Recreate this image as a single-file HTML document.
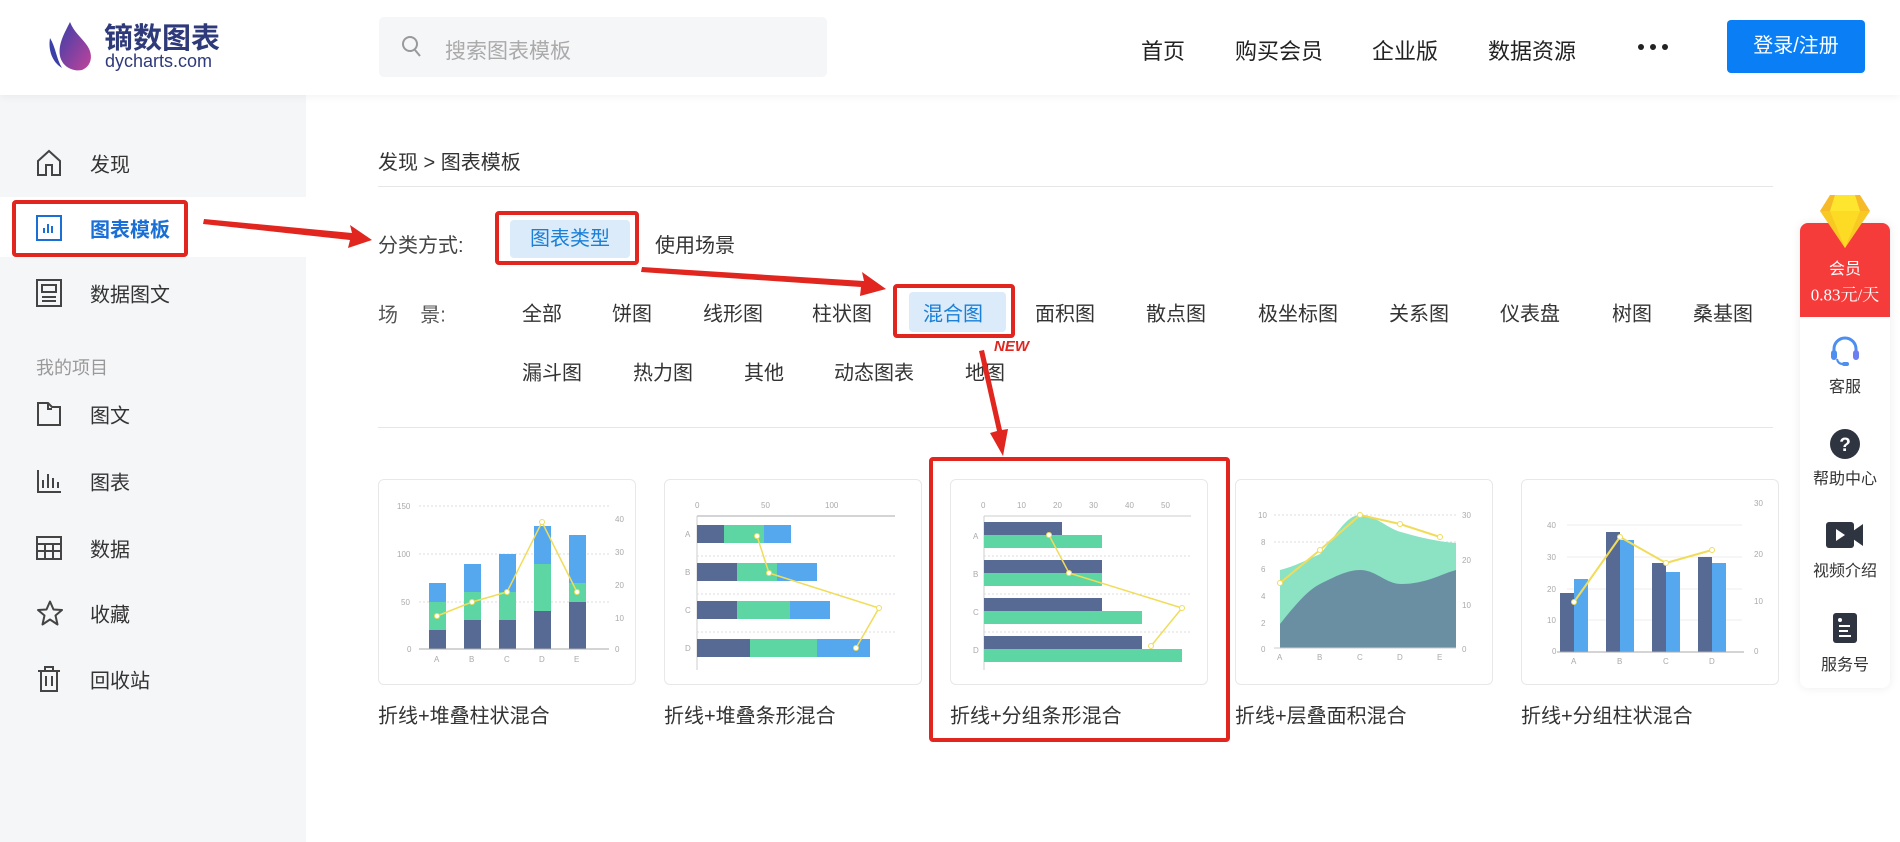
<!DOCTYPE html>
<html><head><meta charset="utf-8">
<style>
*{margin:0;padding:0;box-sizing:border-box}
body{width:1900px;height:842px;overflow:hidden;background:#fff;font-family:"Liberation Sans","Noto Sans CJK SC",sans-serif;color:#333;position:relative}
.a{position:absolute;white-space:nowrap}
.hdr{position:absolute;left:0;top:0;width:1900px;height:95px;background:#fff;box-shadow:0 2px 8px rgba(0,0,0,.05);z-index:2}
.side{position:absolute;left:0;top:95px;width:306px;height:747px;background:#f5f6f8}
.si{position:absolute;left:90px;font-size:20px;color:#333;transform:translateY(-50%)}
.ic{position:absolute;left:36px;transform:translateY(-50%)}
.cat{position:absolute;font-size:20px;color:#333;transform:translateY(-50%)}
.card{position:absolute;top:479px;width:258px;height:206px;border:1px solid #e8e8e8;border-radius:6px;background:#fff}
.ct{position:absolute;top:714px;font-size:20px;color:#333;transform:translateY(-50%)}
.rb{position:absolute;border:4px solid #e0261f;border-radius:4px}
.rp{position:absolute;left:1800px;width:90px;text-align:center;font-size:16px;color:#333;transform:translateY(-50%)}
</style></head><body>
<div class="hdr">
 <svg class="a" style="left:46px;top:20px" width="50" height="52" viewBox="0 0 50 52">
  <defs><linearGradient id="lg" x1="0" y1="0" x2="1" y2="1"><stop offset="0" stop-color="#3b3fa8"/><stop offset="1" stop-color="#c2439b"/></linearGradient></defs>
  <path d="M24 2 C18 14 12 24 14 36 C16 46 26 52 36 50 C46 46 48 34 40 24 C34 16 28 12 24 2Z" fill="url(#lg)"/>
  <path d="M4 18 C2 30 6 42 16 48 C10 38 10 28 4 18Z" fill="#3b3fa8"/>
 </svg>
 <div class="a" style="left:104px;top:21px;font-size:29px;line-height:30px;font-weight:bold;color:#2e3a7a;font-family:'Noto Sans CJK SC',sans-serif">镝数图表</div>
 <div class="a" style="left:105px;top:52px;font-size:18px;line-height:19px;color:#2e3a7a">dycharts.com</div>
 <div class="a" style="left:379px;top:17px;width:448px;height:60px;background:#f5f6f8;border-radius:5px"></div>
 <svg class="a" style="left:401px;top:35px" width="22" height="24" viewBox="0 0 22 24"><circle cx="9" cy="9" r="7" fill="none" stroke="#999" stroke-width="2"/><path d="M14 15 L19 21" stroke="#999" stroke-width="2"/></svg>
 <div class="a" style="left:445px;top:35px;font-size:21px;color:#aaa">搜索图表模板</div>
 <div class="a" style="left:1141px;top:34px;font-size:22px;color:#222">首页</div>
 <div class="a" style="left:1235px;top:34px;font-size:22px;color:#222">购买会员</div>
 <div class="a" style="left:1372px;top:34px;font-size:22px;color:#222">企业版</div>
 <div class="a" style="left:1488px;top:34px;font-size:22px;color:#222">数据资源</div>
 <div class="a" style="left:1638px;top:44px;width:6px;height:6px;border-radius:3px;background:#222;box-shadow:12px 0 #222,24px 0 #222"></div>
 <div class="a" style="left:1727px;top:20px;width:138px;height:53px;background:#0a7ff5;border-radius:4px;color:#fff;font-size:20px;text-align:center;line-height:53px">登录/注册</div>
</div>

<div class="side">
 <div class="a" style="left:0;top:102px;width:306px;height:60px;background:#fff"></div>
</div>
<svg class="ic" style="top:163px" width="26" height="28" viewBox="0 0 26 28"><path d="M2 12 L13 2 L24 12 V26 H16 V16 H10 V26 H2Z" fill="none" stroke="#444" stroke-width="2"/></svg>
<div class="si" style="top:163px">发现</div>
<svg class="ic" style="top:228px" width="26" height="26" viewBox="0 0 26 26"><rect x="1" y="1" width="24" height="24" fill="none" stroke="#1a6fd6" stroke-width="2"/><path d="M8 18V13M12 18V9M16 18V11" stroke="#1a6fd6" stroke-width="2"/></svg>
<div class="si" style="top:228px;color:#1a6fd6;font-weight:bold">图表模板</div>
<svg class="ic" style="top:293px" width="26" height="28" viewBox="0 0 26 28"><rect x="1" y="1" width="24" height="26" fill="none" stroke="#444" stroke-width="2"/><rect x="6" y="6" width="14" height="7" fill="none" stroke="#444" stroke-width="2"/><path d="M6 18H20M6 22H20" stroke="#444" stroke-width="2"/></svg>
<div class="si" style="top:293px">数据图文</div>
<div class="si" style="top:367px;left:36px;font-size:18px;color:#999">我的项目</div>
<svg class="ic" style="top:414px" width="26" height="26" viewBox="0 0 26 26"><path d="M2 2H12L16 6H24V24H2Z M12 2V8H16" fill="none" stroke="#444" stroke-width="2"/></svg>
<div class="si" style="top:414px">图文</div>
<svg class="ic" style="top:481px" width="26" height="26" viewBox="0 0 26 26"><path d="M2 2V24H25M7 20V12M12 20V6M17 20V10M22 20V14" fill="none" stroke="#444" stroke-width="2"/></svg>
<div class="si" style="top:481px">图表</div>
<svg class="ic" style="top:548px" width="26" height="24" viewBox="0 0 26 24"><rect x="1" y="1" width="24" height="22" fill="none" stroke="#444" stroke-width="2"/><path d="M1 8H25M1 15H25M9 8V23M17 8V23" stroke="#444" stroke-width="2"/></svg>
<div class="si" style="top:548px">数据</div>
<svg class="ic" style="top:613px" width="28" height="27" viewBox="0 0 28 27"><path d="M14 2L17.5 10L26 10.5L19.5 16L21.5 25L14 20L6.5 25L8.5 16L2 10.5L10.5 10Z" fill="none" stroke="#444" stroke-width="2" stroke-linejoin="round"/></svg>
<div class="si" style="top:613px">收藏</div>
<svg class="ic" style="top:679px" width="26" height="28" viewBox="0 0 26 28"><path d="M2 6H24M9 6V2H17V6M5 6V26H21V6M10 11V21M16 11V21" fill="none" stroke="#444" stroke-width="2"/></svg>
<div class="si" style="top:679px">回收站</div>

<div class="a" style="left:378px;top:146px;font-size:20px;color:#333">发现 &gt; 图表模板</div>
<div class="a" style="left:378px;top:186px;width:1395px;height:1px;background:#e6e6e6"></div>
<div class="a" style="left:378px;top:229px;font-size:20px;color:#444">分类方式:</div>
<div class="a" style="left:510px;top:220px;width:120px;height:38px;background:#dcebfa;border-radius:4px;color:#1a7fd6;font-size:20px;text-align:center;line-height:38px">图表类型</div>
<div class="a" style="left:655px;top:229px;font-size:20px;color:#333">使用场景</div>
<div class="cat" style="left:378px;top:313px;color:#555">场&nbsp;&nbsp;&nbsp;&nbsp;景:</div>
<div class="a" style="left:909px;top:292px;width:97px;height:40px;background:#dcebfa;border-radius:4px"></div>
<div class="cat" style="left:522px;top:312px">全部</div>
<div class="cat" style="left:612px;top:312px">饼图</div>
<div class="cat" style="left:703px;top:312px">线形图</div>
<div class="cat" style="left:812px;top:312px">柱状图</div>
<div class="cat" style="left:923px;top:312px;color:#1a7fd6">混合图</div>
<div class="cat" style="left:1035px;top:312px">面积图</div>
<div class="cat" style="left:1146px;top:312px">散点图</div>
<div class="cat" style="left:1258px;top:312px">极坐标图</div>
<div class="cat" style="left:1389px;top:312px">关系图</div>
<div class="cat" style="left:1500px;top:312px">仪表盘</div>
<div class="cat" style="left:1612px;top:312px">树图</div>
<div class="cat" style="left:1693px;top:312px">桑基图</div>
<div class="cat" style="left:522px;top:371px">漏斗图</div>
<div class="cat" style="left:633px;top:371px">热力图</div>
<div class="cat" style="left:744px;top:371px">其他</div>
<div class="cat" style="left:834px;top:371px">动态图表</div>
<div class="cat" style="left:965px;top:371px">地图</div>
<div class="a" style="left:994px;top:338px;font-size:15px;font-weight:bold;font-style:italic;color:#e0261f">NEW</div>
<div class="a" style="left:378px;top:427px;width:1395px;height:1px;background:#e6e6e6"></div>

<div class="card" style="left:378px"><svg width="258" height="206" viewBox="0 0 258 206" font-size="8" fill="#aaa">
<g stroke="#ddd" stroke-dasharray="2 2"><line x1="40" y1="26" x2="230" y2="26"/><line x1="40" y1="74" x2="230" y2="74"/><line x1="40" y1="122" x2="230" y2="122"/></g>
<text x="18" y="29">150</text><text x="18" y="77">100</text><text x="22" y="125">50</text><text x="28" y="172">0</text>
<text x="236" y="42">40</text><text x="236" y="75">30</text><text x="236" y="108">20</text><text x="236" y="141">10</text><text x="236" y="172">0</text>
<rect x="50" y="150" width="17" height="19" fill="#566a94"/><rect x="50" y="122" width="17" height="28" fill="#5dd6a3"/><rect x="50" y="103" width="17" height="19" fill="#55a8ee"/>
<rect x="85" y="140" width="17" height="29" fill="#566a94"/><rect x="85" y="112" width="17" height="28" fill="#5dd6a3"/><rect x="85" y="84" width="17" height="28" fill="#55a8ee"/>
<rect x="120" y="140" width="17" height="29" fill="#566a94"/><rect x="120" y="112" width="17" height="28" fill="#5dd6a3"/><rect x="120" y="74" width="17" height="38" fill="#55a8ee"/>
<rect x="155" y="131" width="17" height="38" fill="#566a94"/><rect x="155" y="84" width="17" height="47" fill="#5dd6a3"/><rect x="155" y="46" width="17" height="38" fill="#55a8ee"/>
<rect x="190" y="122" width="17" height="47" fill="#566a94"/><rect x="190" y="103" width="17" height="19" fill="#5dd6a3"/><rect x="190" y="55" width="17" height="48" fill="#55a8ee"/>
<line x1="40" y1="169" x2="230" y2="169" stroke="#aaa"/>
<polyline points="58,136 93,122 128,112 163,42 198,112" fill="none" stroke="#f1dc5a" stroke-width="1.5"/>
<g fill="#fff" stroke="#f1dc5a"><circle cx="58" cy="136" r="2.5"/><circle cx="93" cy="122" r="2.5"/><circle cx="128" cy="112" r="2.5"/><circle cx="163" cy="42" r="2.5"/><circle cx="198" cy="112" r="2.5"/></g>
<text x="55" y="182">A</text><text x="90" y="182">B</text><text x="125" y="182">C</text><text x="160" y="182">D</text><text x="195" y="182">E</text></svg></div>

<div class="card" style="left:664px"><svg width="258" height="206" viewBox="0 0 258 206" font-size="8" fill="#aaa">
<text x="30" y="28">0</text><text x="96" y="28">50</text><text x="160" y="28">100</text>
<line x1="32" y1="36" x2="230" y2="36" stroke="#aaa"/><line x1="32" y1="36" x2="32" y2="190" stroke="#ccc"/>
<g stroke="#ddd" stroke-dasharray="2 2"><line x1="32" y1="76" x2="230" y2="76"/><line x1="32" y1="114" x2="230" y2="114"/><line x1="32" y1="152" x2="230" y2="152"/></g>
<text x="20" y="57">A</text><text x="20" y="95">B</text><text x="20" y="133">C</text><text x="20" y="171">D</text>
<rect x="32" y="45" width="27" height="18" fill="#566a94"/><rect x="59" y="45" width="40" height="18" fill="#5dd6a3"/><rect x="99" y="45" width="27" height="18" fill="#55a8ee"/>
<rect x="32" y="83" width="40" height="18" fill="#566a94"/><rect x="72" y="83" width="40" height="18" fill="#5dd6a3"/><rect x="112" y="83" width="40" height="18" fill="#55a8ee"/>
<rect x="32" y="121" width="40" height="18" fill="#566a94"/><rect x="72" y="121" width="53" height="18" fill="#5dd6a3"/><rect x="125" y="121" width="40" height="18" fill="#55a8ee"/>
<rect x="32" y="159" width="53" height="18" fill="#566a94"/><rect x="85" y="159" width="67" height="18" fill="#5dd6a3"/><rect x="152" y="159" width="53" height="18" fill="#55a8ee"/>
<polyline points="92,56 104,93 214,128 191,168" fill="none" stroke="#f1dc5a" stroke-width="1.5"/>
<g fill="#fff" stroke="#f1dc5a"><circle cx="92" cy="56" r="2.5"/><circle cx="104" cy="93" r="2.5"/><circle cx="214" cy="128" r="2.5"/><circle cx="191" cy="168" r="2.5"/></g></svg></div>

<div class="card" style="left:950px"><svg width="258" height="206" viewBox="0 0 258 206" font-size="8" fill="#aaa">
<text x="30" y="28">0</text><text x="66" y="28">10</text><text x="102" y="28">20</text><text x="138" y="28">30</text><text x="174" y="28">40</text><text x="210" y="28">50</text>
<line x1="33" y1="36" x2="240" y2="36" stroke="#ccc"/><line x1="33" y1="36" x2="33" y2="190" stroke="#ccc"/>
<g stroke="#ddd" stroke-dasharray="2 2"><line x1="33" y1="76" x2="240" y2="76"/><line x1="33" y1="114" x2="240" y2="114"/><line x1="33" y1="152" x2="240" y2="152"/></g>
<text x="22" y="59">A</text><text x="22" y="97">B</text><text x="22" y="135">C</text><text x="22" y="173">D</text>
<rect x="33" y="42" width="78" height="13" fill="#566a94"/><rect x="33" y="55" width="118" height="13" fill="#5dd6a3"/>
<rect x="33" y="80" width="118" height="13" fill="#566a94"/><rect x="33" y="93" width="118" height="13" fill="#5dd6a3"/>
<rect x="33" y="118" width="118" height="13" fill="#566a94"/><rect x="33" y="131" width="158" height="13" fill="#5dd6a3"/>
<rect x="33" y="156" width="158" height="13" fill="#566a94"/><rect x="33" y="169" width="198" height="13" fill="#5dd6a3"/>
<polyline points="98,55 118,93 231,128 200,166" fill="none" stroke="#f1dc5a" stroke-width="1.5"/>
<g fill="#fff" stroke="#f1dc5a"><circle cx="98" cy="55" r="2.5"/><circle cx="118" cy="93" r="2.5"/><circle cx="231" cy="128" r="2.5"/><circle cx="200" cy="166" r="2.5"/></g></svg></div>

<div class="card" style="left:1235px"><svg width="258" height="206" viewBox="0 0 258 206" font-size="8" fill="#aaa">
<g stroke="#ddd" stroke-dasharray="2 2"><line x1="38" y1="35" x2="220" y2="35"/><line x1="38" y1="62" x2="220" y2="62"/></g>
<text x="22" y="38">10</text><text x="25" y="65">8</text><text x="25" y="92">6</text><text x="25" y="119">4</text><text x="25" y="146">2</text><text x="25" y="172">0</text>
<text x="226" y="38">30</text><text x="226" y="83">20</text><text x="226" y="128">10</text><text x="226" y="172">0</text>
<path d="M44 90 C60 86 70 80 84 74 C100 56 110 35 124 35 C140 35 150 48 165 52 C185 58 205 62 220 63 V168 H44Z" fill="#8be3c3"/>
<path d="M44 144 C60 124 72 110 84 104 C100 96 112 90 124 90 C140 90 150 104 165 104 C190 104 205 94 220 90 V168 H44Z" fill="#6a8fa3"/>
<line x1="38" y1="168" x2="220" y2="168" stroke="#ccc"/>
<polyline points="44,103 84,70 124,35 164,44 204,57" fill="none" stroke="#f1dc5a" stroke-width="2"/>
<g fill="#fff" stroke="#f1dc5a"><circle cx="44" cy="103" r="2.5"/><circle cx="84" cy="70" r="2.5"/><circle cx="124" cy="35" r="2.5"/><circle cx="164" cy="44" r="2.5"/><circle cx="204" cy="57" r="2.5"/></g>
<text x="41" y="180">A</text><text x="81" y="180">B</text><text x="121" y="180">C</text><text x="161" y="180">D</text><text x="201" y="180">E</text></svg></div>

<div class="card" style="left:1521px"><svg width="258" height="206" viewBox="0 0 258 206" font-size="8" fill="#aaa">
<g stroke="#eee"><line x1="45" y1="45" x2="220" y2="45"/><line x1="45" y1="77" x2="220" y2="77"/><line x1="45" y1="109" x2="220" y2="109"/><line x1="45" y1="140" x2="220" y2="140"/></g>
<text x="25" y="48">40</text><text x="25" y="80">30</text><text x="25" y="112">20</text><text x="25" y="143">10</text><text x="30" y="174">0</text>
<text x="232" y="26">30</text><text x="232" y="77">20</text><text x="232" y="124">10</text><text x="232" y="174">0</text>
<rect x="38" y="113" width="14" height="59" fill="#566a94"/><rect x="52" y="99" width="14" height="73" fill="#55a8ee"/>
<rect x="84" y="52" width="14" height="120" fill="#566a94"/><rect x="98" y="60" width="14" height="112" fill="#55a8ee"/>
<rect x="130" y="83" width="14" height="89" fill="#566a94"/><rect x="144" y="92" width="14" height="80" fill="#55a8ee"/>
<rect x="176" y="77" width="14" height="95" fill="#566a94"/><rect x="190" y="83" width="14" height="89" fill="#55a8ee"/>
<line x1="35" y1="172" x2="222" y2="172" stroke="#aaa"/>
<polyline points="52,122 98,57 144,83 190,70" fill="none" stroke="#f1dc5a" stroke-width="2"/>
<g fill="#fff" stroke="#f1dc5a"><circle cx="52" cy="122" r="2.5"/><circle cx="98" cy="57" r="2.5"/><circle cx="144" cy="83" r="2.5"/><circle cx="190" cy="70" r="2.5"/></g>
<text x="49" y="184">A</text><text x="95" y="184">B</text><text x="141" y="184">C</text><text x="187" y="184">D</text></svg></div>

<div class="ct" style="left:378px">折线+堆叠柱状混合</div>
<div class="ct" style="left:664px">折线+堆叠条形混合</div>
<div class="ct" style="left:950px">折线+分组条形混合</div>
<div class="ct" style="left:1235px">折线+层叠面积混合</div>
<div class="ct" style="left:1521px">折线+分组柱状混合</div>

<div class="rb" style="left:12px;top:200px;width:176px;height:57px"></div>
<div class="rb" style="left:495px;top:211px;width:144px;height:54px"></div>
<div class="rb" style="left:893px;top:284px;width:122px;height:54px"></div>
<div class="rb" style="left:929px;top:457px;width:301px;height:285px"></div>
<svg class="a" style="left:0;top:0" width="1900" height="842">
<g fill="#e0261f">
<polygon points="204,219 352,233 350,225 372,240 348,248 350,240 203,224"/>
<polygon points="642,267 864,281 862,272 886,289 860,296 861,287 641,272"/>
<polygon points="979,351 997,431 990,433 1003,456 1008,429 1002,430 984,350"/>
</g></svg>

<div class="a" style="left:1800px;top:223px;width:90px;height:465px;background:#fff;border-radius:8px;box-shadow:0 0 10px rgba(0,0,0,.08)"></div>
<div class="a" style="left:1800px;top:223px;width:90px;height:94px;background:#f63b3b;border-radius:8px 8px 0 0"></div>
<svg class="a" style="left:1818px;top:193px" width="54" height="56" viewBox="0 0 54 56"><polygon points="12,2 42,2 52,18 27,55 2,18" fill="#f6b928"/><polygon points="17,2 37,2 42,18 27,55 12,18" fill="#ffe62e"/><polygon points="2,18 52,18 27,55" fill="#fcd420" opacity=".6"/></svg>
<div class="rp" style="top:267px;color:#fff">会员</div>
<div class="rp" style="top:293px;color:#fff;font-family:'Liberation Serif','Noto Serif CJK SC',serif;font-size:17px">0.83元/天</div>
<svg class="a" style="left:1828px;top:335px" width="34" height="32" viewBox="0 0 34 32"><path d="M6 18 V14 A11 11 0 0 1 28 14 V18" fill="none" stroke="#4d8ef0" stroke-width="3"/><rect x="3" y="15" width="6" height="10" rx="3" fill="#4d8ef0"/><rect x="25" y="15" width="6" height="10" rx="3" fill="#6b7ff0"/><path d="M9 24 Q10 29 15 29" fill="none" stroke="#4d8ef0" stroke-width="2"/><rect x="14" y="27" width="7" height="4" rx="2" fill="#4d8ef0"/></svg>
<div class="rp" style="top:385px">客服</div>
<svg class="a" style="left:1829px;top:428px" width="32" height="32"><circle cx="16" cy="16" r="15" fill="#2e3440"/><text x="16" y="23" font-size="19" font-weight="bold" fill="#fff" text-anchor="middle" font-family="Liberation Sans">?</text></svg>
<div class="rp" style="top:477px">帮助中心</div>
<svg class="a" style="left:1826px;top:522px" width="38" height="26" viewBox="0 0 38 26"><rect x="0" y="0" width="28" height="26" rx="3" fill="#2e3440"/><polygon points="27,9 37,2 37,24 27,17" fill="#2e3440"/><polygon points="10,7 19,13 10,19" fill="#fff"/></svg>
<div class="rp" style="top:569px">视频介绍</div>
<svg class="a" style="left:1833px;top:613px" width="24" height="30" viewBox="0 0 24 30"><rect x="0" y="0" width="24" height="30" rx="3" fill="#2e3440"/><circle cx="7" cy="7" r="2" fill="#fff"/><path d="M6 13H17M6 18H15M6 23H18" stroke="#fff" stroke-width="2"/></svg>
<div class="rp" style="top:663px">服务号</div>
</body></html>
